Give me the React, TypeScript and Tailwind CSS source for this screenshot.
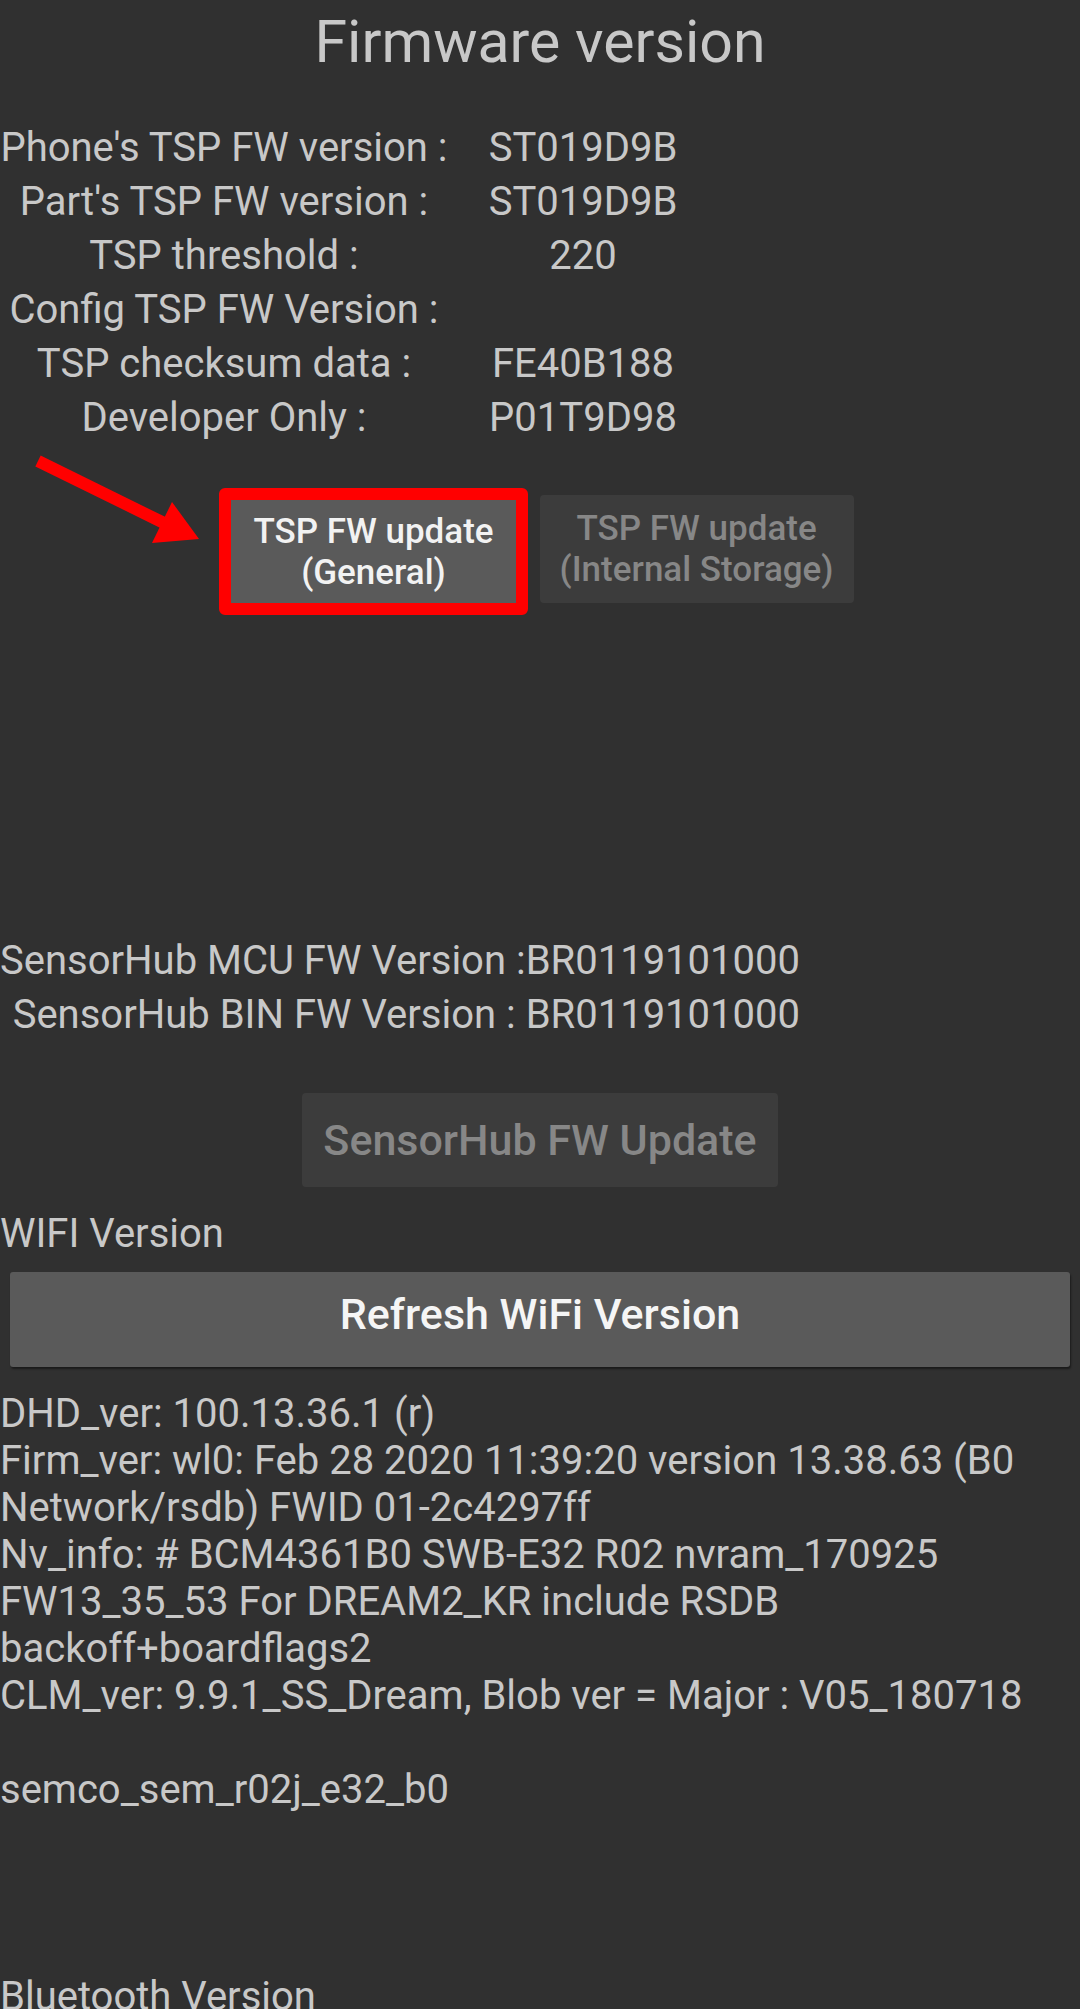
import React from "react";

const tspRows = [
  { label: "Phone's TSP FW version :", value: "ST019D9B" },
  { label: "Part's TSP FW version :", value: "ST019D9B" },
  { label: "TSP threshold :", value: "220" },
  { label: "Config TSP FW Version :", value: "" },
  { label: "TSP checksum data :", value: "FE40B188" },
  { label: "Developer Only :", value: "P01T9D98" },
];

const wifiLines = [
  "DHD_ver: 100.13.36.1 (r)",
  "Firm_ver: wl0: Feb 28 2020 11:39:20 version 13.38.63 (B0",
  "Network/rsdb) FWID 01-2c4297ff",
  "Nv_info: # BCM4361B0 SWB-E32 R02 nvram_170925",
  "FW13_35_53 For DREAM2_KR include RSDB",
  "backoff+boardflags2",
  "CLM_ver: 9.9.1_SS_Dream, Blob ver = Major : V05_180718",
  "",
  "semco_sem_r02j_e32_b0",
];

const ArrowMark = () => (
  <svg
    className="absolute left-0 top-0"
    width="220"
    height="120"
    viewBox="0 0 220 120"
  >
    <line x1="38" y1="16" x2="164" y2="78" stroke="#ff0000" strokeWidth="12" />
    <polygon points="152,98 172,57 199,94" fill="#ff0000" />
  </svg>
);

const FirmwareVersion = () => {
  return (
    <div
      className="w-[1080px] min-h-[2009px] bg-[#303030] text-[#c8c8c8] overflow-hidden"
      style={{ fontFamily: "Roboto, 'Noto Sans', sans-serif" }}
    >
      {/* Title */}
      <div className="pt-[7px] text-center text-[59px] leading-[69px]">
        Firmware version
      </div>

      {/* TSP table */}
      <div className="mt-[45px] grid grid-cols-[448px_270px] text-[40px] leading-[54px]">
        {tspRows.map((row) => (
          <React.Fragment key={row.label}>
            <div className="text-center whitespace-nowrap">{row.label}</div>
            <div className="text-center whitespace-nowrap">{row.value}</div>
          </React.Fragment>
        ))}
      </div>

      {/* TSP update buttons */}
      <div className="relative pt-[43px] flex justify-center items-start pr-[7px]">
        <ArrowMark />
        <div className="rounded-[6px] border-[12px] border-[#ff0000] bg-[#ff0000]">
          <div className="h-[103px] px-[22px] flex flex-col items-center justify-center bg-[#5a5a5a] text-[#f2f2f2] text-[35px] leading-[41px] font-medium">
            <span>TSP FW update</span>
            <span>(General)</span>
          </div>
        </div>
        <div className="ml-[12px] mt-[7px] h-[108px] px-[20px] flex flex-col items-center justify-center rounded-[4px] bg-[#3c3c3c] text-[#878787] text-[35px] leading-[41px] font-medium">
          <span>TSP FW update</span>
          <span>(Internal Storage)</span>
        </div>
      </div>

      {/* SensorHub */}
      <div className="mt-[319px] grid grid-cols-[auto_1fr] text-[40px] leading-[54px]">
        <div className="text-right whitespace-nowrap">SensorHub MCU FW Version :</div>
        <div className="whitespace-nowrap">BR0119101000</div>
        <div className="text-right whitespace-nowrap">SensorHub BIN FW Version :&nbsp;</div>
        <div className="whitespace-nowrap">BR0119101000</div>
      </div>

      <div className="mt-[51px] flex justify-center">
        <div className="h-[94px] px-[21px] flex items-center rounded-[4px] bg-[#3c3c3c] text-[#878787] text-[43px] font-medium">
          SensorHub FW Update
        </div>
      </div>

      {/* WiFi */}
      <div className="mt-[20px] text-[40px] leading-[54px]">WIFI Version</div>
      <div className="mt-[11px] mx-[10px] h-[95px] pb-[10px] flex items-center justify-center rounded-[3px] bg-[#5a5a5a] shadow-[1px_2px_2px_rgba(0,0,0,0.45)] text-[#f5f5f5] text-[43px] font-medium">
        Refresh WiFi Version
      </div>

      <div className="mt-[23px] text-[40px] leading-[47px]">
        {wifiLines.map((line, i) => (
          <div key={i} className="h-[47px] whitespace-nowrap">
            {line}
          </div>
        ))}
      </div>

      {/* Bluetooth */}
      <div className="mt-[160px] text-[40px] leading-[47px]">Bluetooth Version</div>
    </div>
  );
};

export default function App() {
  return <FirmwareVersion />;
}
